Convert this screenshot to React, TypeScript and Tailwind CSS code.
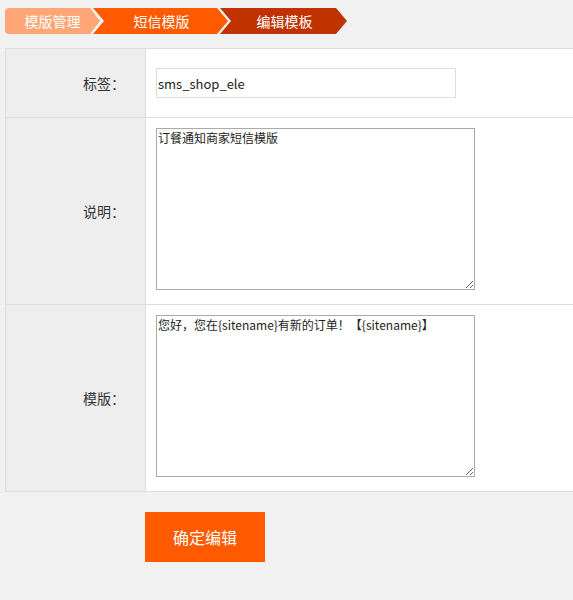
import React from 'react';

const font = "font-['Noto_Sans_CJK_SC','Noto_Sans',sans-serif]";

export default function App() {
  return (
    <div className={`min-h-[600px] w-full overflow-hidden bg-[#f1f1f1] ${font}`}>
      {/* Breadcrumb */}
      <div className="flex pl-[5px] pt-[8px]">
        <div className="flex h-[26px] w-[95px] items-center justify-center rounded-l-[4px] bg-[#ffa676] text-[14px] text-white [clip-path:polygon(0_0,calc(100%-10px)_0,100%_50%,calc(100%-10px)_100%,0_100%)]">
          模版管理
        </div>
        <div className="-ml-[7px] flex h-[26px] w-[135px] items-center justify-center pl-[2px] text-[14px] text-white bg-[#ff5a00] [clip-path:polygon(0_0,calc(100%-11px)_0,100%_50%,calc(100%-11px)_100%,0_100%,11px_50%)]">
          短信模版
        </div>
        <div className="-ml-[8px] flex h-[26px] w-[127px] items-center justify-center pl-[2px] text-[14px] text-white bg-[#c03300] [clip-path:polygon(0_0,calc(100%-11px)_0,100%_50%,calc(100%-11px)_100%,0_100%,11px_50%)]">
          编辑模板
        </div>
      </div>

      {/* Form table */}
      <div className="mt-[14px] pl-[5px]">
        <table className="w-[700px] border-collapse border border-[#dddddd] text-[14px] text-[#333333]">
          <tbody>
            <tr>
              <td className="w-[140px] border border-[#dddddd] bg-[#eeeeee] pr-[20px] text-right align-middle">
                标签：
              </td>
              <td className="border border-[#dddddd] bg-white pb-[19px] pl-[10px] pt-[19px] align-top">
                <input
                  type="text"
                  defaultValue="sms_shop_ele"
                  className="block h-[30px] w-[300px] border border-[#dddddd] bg-white px-[1px] text-[13px] text-[#222] outline-none"
                />
              </td>
            </tr>
            <tr>
              <td className="border border-[#dddddd] bg-[#eeeeee] pr-[20px] text-right align-middle">
                说明：
              </td>
              <td className="border border-[#dddddd] bg-white pb-[14px] pl-[10px] pt-[10px] align-top">
                <textarea
                  defaultValue="订餐通知商家短信模版"
                  className="block h-[162px] w-[319px] border border-[#aaaaaa] bg-white p-0 pl-[1px] text-[12px] leading-[18px] text-[#222] outline-none"
                />
              </td>
            </tr>
            <tr>
              <td className="border border-[#dddddd] bg-[#eeeeee] pr-[20px] text-right align-middle">
                模版：
              </td>
              <td className="border border-[#dddddd] bg-white pb-[14px] pl-[10px] pt-[10px] align-top">
                <textarea
                  defaultValue="您好，您在{sitename}有新的订单！【{sitename}】"
                  className="block h-[162px] w-[319px] border border-[#aaaaaa] bg-white p-0 pl-[1px] text-[12px] leading-[18px] text-[#222] outline-none"
                />
              </td>
            </tr>
          </tbody>
        </table>
      </div>

      <div className="pl-[145px] pt-[20px]">
        <button
          type="button"
          className="h-[50px] w-[120px] bg-[#ff5a00] text-[16px] text-white"
        >
          确定编辑
        </button>
      </div>
    </div>
  );
}
